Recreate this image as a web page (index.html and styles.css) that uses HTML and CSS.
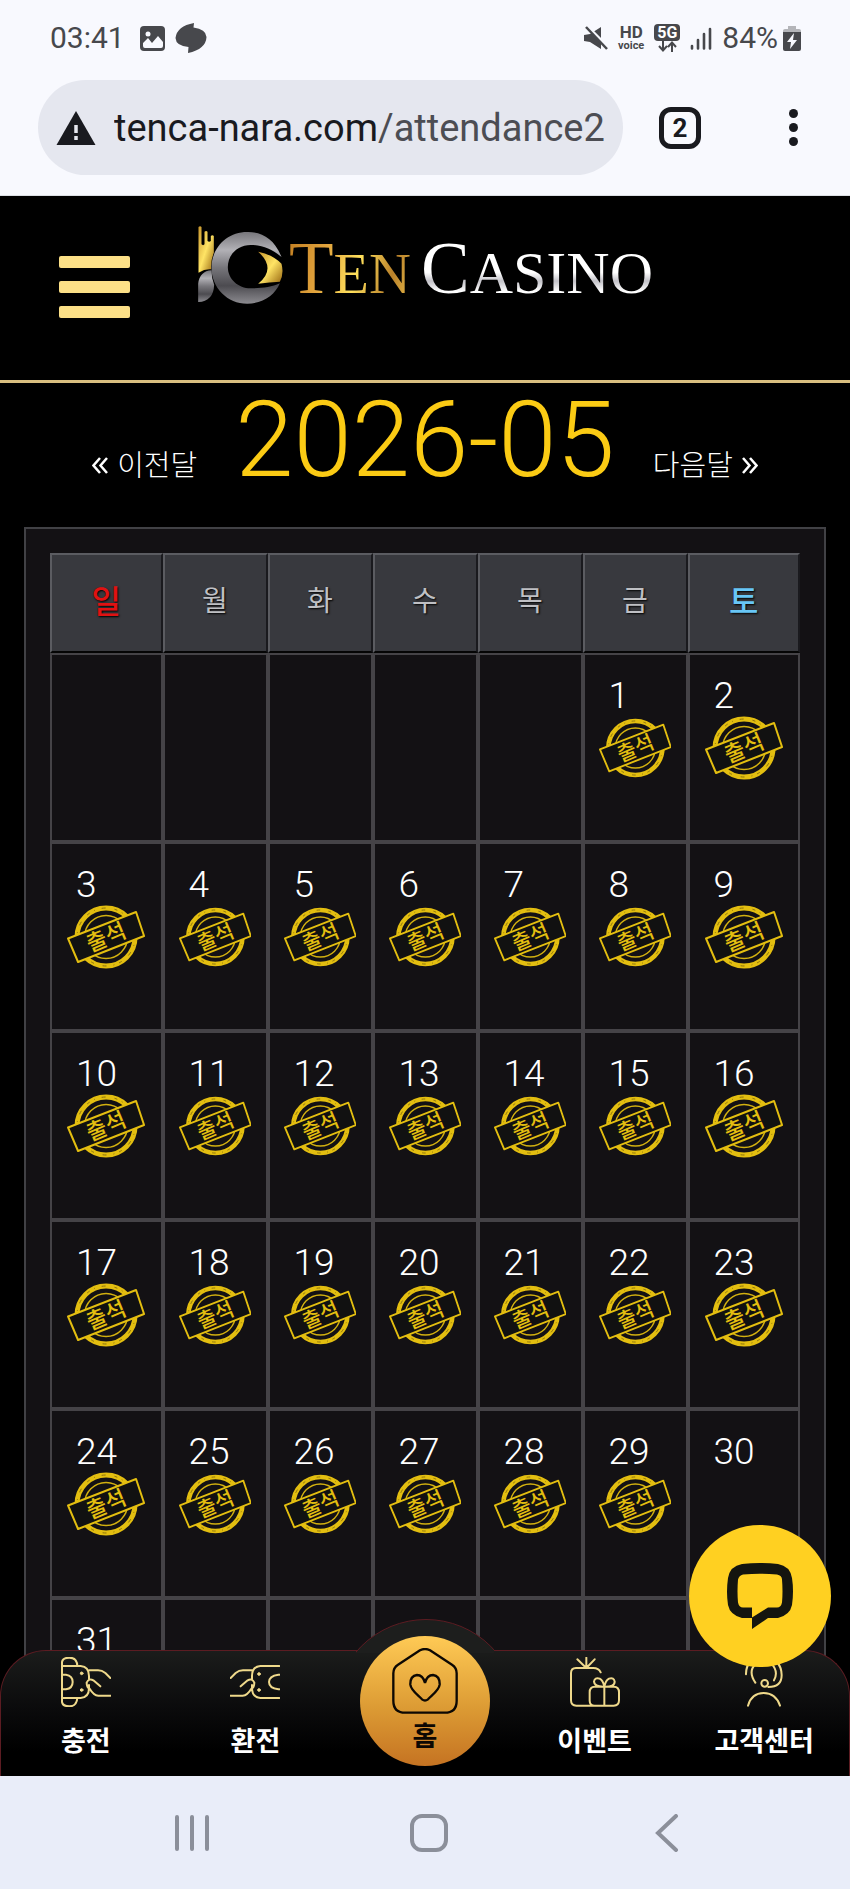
FILE: index.html
```html
<!DOCTYPE html>
<html lang="ko">
<head>
<meta charset="utf-8">
<meta name="viewport" content="width=device-width, initial-scale=1">
<title>TEN CASINO</title>
<link rel="stylesheet" href="styles.css">
</head>
<body>
<svg class="defs" aria-hidden="true">
  <defs>
    <symbol id="stamp" viewBox="0 0 78 64">
      <circle cx="39" cy="32" r="29" fill="none" stroke="#e3be10" stroke-width="5"/>
      <circle cx="39" cy="32" r="29" fill="none" stroke="#8a720c" stroke-width="1" stroke-dasharray="3 5 1 7 4 9"/>
      <circle cx="39" cy="32" r="21.5" fill="none" stroke="#d2b010" stroke-width="1.5"/>
      <path d="M1 33.500 69 7 77 31 11 57Z" fill="#111" stroke="#e3be10" stroke-width="2" stroke-linejoin="round"/>
      <text x="39" y="40" text-anchor="middle" transform="rotate(-23 39 32)" class="stamp-text">출석</text>
    </symbol>
  </defs>
</svg>

<div class="phone">
  <div class="status">
    <div class="status-side">
      <span class="status-text">03:41</span>
      <svg class="status-first" width="25" height="25" viewBox="0 0 25 25"><rect width="25" height="25" rx="4" fill="#47484c"/><circle cx="8" cy="8" r="2.500" fill="#f8f9fe"/><path d="M3 20v-3l5-5 4 5 6-7 5 6v4q0 2-2 2H5q-2 0-2-2Z" fill="#f8f9fe"/></svg>
      <svg width="32" height="30" viewBox="0 0 32 30"><path d="M19 0 18.500 4.500Q31 6 31.500 14 31 26 13 30L13.500 24Q1 23 0.500 15 2 3 19 0Z" fill="#47484c"/></svg>
    </div>
    <div class="status-side">
      <svg width="24" height="24" viewBox="0 0 24 24"><path d="M0 9 6 8 17 1V23L6 16 0 15Z" fill="#47484c"/><path d="M4 1 24 21" stroke="#f8f9fe" stroke-width="3"/><path d="M2 1 23 23" stroke="#47484c" stroke-width="2.500"/></svg>
      <span class="hd"><b>HD</b><small>voice</small></span>
      <span class="net"><b>5G</b><svg width="20" height="11" viewBox="0 0 20 11" fill="none" stroke="#47484c" stroke-width="2"><path d="M6 0V9M2 5 6 9.500 10 5M15 11V2M11 6 15 1.500 19 6"/></svg></span>
      <svg width="22" height="23" viewBox="0 0 22 23" stroke="#47484c" stroke-width="2.600" stroke-linecap="round"><path d="M2 19v2.500M8 13v8.500M14 7v14.500M20 2v19.500"/></svg>
      <span class="battery"><span class="status-text">84%</span><svg width="18" height="26" viewBox="0 0 18 26"><path d="M5 1h8v3h3q2 0 2 2v4H0V6q0-2 2-2h3Z" fill="#b4b5b9"/><path d="M0 7h18v17q0 2-2 2H2q-2 0-2-2Z" fill="#47484c"/><path d="M11 8 4 17h4l-1 7 7-9h-4Z" fill="#f8f9fe"/></svg></span>
    </div>
  </div>

  <div class="browser">
    <button class="address" type="button" aria-label="주소창">
      <svg width="40" height="34" viewBox="0 0 40 34"><path d="M20 0 39.500 34H.5Z" fill="#191a1f"/><path d="M20 14v8M20 25v4" stroke="#e6e8ef" stroke-width="3.500"/></svg>
      <span class="url">tenca-nara.com<span class="url-path">/attendance2</span></span>
    </button>
    <button class="tabs" type="button" aria-label="탭">2</button>
    <button class="more" type="button" aria-label="더보기"><i></i><i></i><i></i></button>
  </div>

  <div class="site">
    <header class="header">
      <button class="burger" type="button" aria-label="메뉴"><i></i><i></i><i></i></button>
      <a class="logo" href="#" aria-label="TEN CASINO">
        <svg width="85" height="78" viewBox="0 0 254 234">
          <defs>
            <linearGradient id="silver" x1="0" y1="0" x2="0" y2="1"><stop offset="0" stop-color="#77767b"/><stop offset=".25" stop-color="#b2b1b6"/><stop offset=".5" stop-color="#77767b"/><stop offset=".75" stop-color="#4c4b50"/><stop offset="1" stop-color="#8c8b90"/></linearGradient>
            <linearGradient id="gold" x1="0" y1="0" x2="1" y2="1"><stop offset="0" stop-color="#c8962c"/><stop offset=".5" stop-color="#ffe465"/><stop offset="1" stop-color="#96650f"/></linearGradient>
          </defs>
          <path d="M250 93C228 35 188 17 147 18 85 18 40 67 40 125c0 60 48 108 107 108 47 0 83-25 98-61-25 12-55 15-88 15-36 0-68-27-68-64 0-38 31-66 68-66 38 0 66 14 93 36Z" fill="url(#silver)"/>
          <path d="M0 228v-55q5-38 40-40 0 24 8 43-2 50-48 52Z" fill="url(#silver)"/>
          <path d="M1 3q5-4 9 0v52q5 5 9 0V17q5-4 9 0v28q5 4 10 0V30q5-4 9 0v50q-10 24-8 50-18-2-38 10Z" fill="url(#gold)"/>
          <path d="M180 77q43 9 70 36 8 30-5 54-30 1-65 6 56-45 0-96Z" fill="url(#gold)"/>
        </svg>
        <span class="word ten">T<small>EN</small></span>
        <span class="word casino">C<small>ASINO</small></span>
      </a>
    </header>

    <main class="main">
      <div class="month">
        <a class="month-link" href="#"><svg width="16" height="17" viewBox="0 0 16 17" fill="none" stroke="#fff" stroke-width="2.500"><path d="M8 1 1.500 8.500 8 16M15 1 8.500 8.500 15 16"/></svg><span>이전달</span></a>
        <h1>2026-05</h1>
        <a class="month-link" href="#"><span>다음달</span><svg width="16" height="17" viewBox="0 0 16 17" fill="none" stroke="#fff" stroke-width="2.500"><path d="M1 1 7.500 8.500 1 16M8 1 14.500 8.500 8 16"/></svg></a>
      </div>

      <div class="frame">
        <table class="calendar">
          <thead>
            <tr><th class="sun" scope="col">일</th><th scope="col">월</th><th scope="col">화</th><th scope="col">수</th><th scope="col">목</th><th scope="col">금</th><th class="sat" scope="col">토</th></tr>
          </thead>
          <tbody>
            <tr>
              <td></td><td></td><td></td><td></td><td></td>
              <td>1<svg class="stamp"><use href="#stamp"/></svg></td>
              <td>2<svg class="stamp"><use href="#stamp"/></svg></td>
            </tr>
            <tr>
              <td>3<svg class="stamp"><use href="#stamp"/></svg></td>
              <td>4<svg class="stamp"><use href="#stamp"/></svg></td>
              <td>5<svg class="stamp"><use href="#stamp"/></svg></td>
              <td>6<svg class="stamp"><use href="#stamp"/></svg></td>
              <td>7<svg class="stamp"><use href="#stamp"/></svg></td>
              <td>8<svg class="stamp"><use href="#stamp"/></svg></td>
              <td>9<svg class="stamp"><use href="#stamp"/></svg></td>
            </tr>
            <tr>
              <td>10<svg class="stamp"><use href="#stamp"/></svg></td>
              <td>11<svg class="stamp"><use href="#stamp"/></svg></td>
              <td>12<svg class="stamp"><use href="#stamp"/></svg></td>
              <td>13<svg class="stamp"><use href="#stamp"/></svg></td>
              <td>14<svg class="stamp"><use href="#stamp"/></svg></td>
              <td>15<svg class="stamp"><use href="#stamp"/></svg></td>
              <td>16<svg class="stamp"><use href="#stamp"/></svg></td>
            </tr>
            <tr>
              <td>17<svg class="stamp"><use href="#stamp"/></svg></td>
              <td>18<svg class="stamp"><use href="#stamp"/></svg></td>
              <td>19<svg class="stamp"><use href="#stamp"/></svg></td>
              <td>20<svg class="stamp"><use href="#stamp"/></svg></td>
              <td>21<svg class="stamp"><use href="#stamp"/></svg></td>
              <td>22<svg class="stamp"><use href="#stamp"/></svg></td>
              <td>23<svg class="stamp"><use href="#stamp"/></svg></td>
            </tr>
            <tr>
              <td>24<svg class="stamp"><use href="#stamp"/></svg></td>
              <td>25<svg class="stamp"><use href="#stamp"/></svg></td>
              <td>26<svg class="stamp"><use href="#stamp"/></svg></td>
              <td>27<svg class="stamp"><use href="#stamp"/></svg></td>
              <td>28<svg class="stamp"><use href="#stamp"/></svg></td>
              <td>29<svg class="stamp"><use href="#stamp"/></svg></td>
              <td>30</td>
            </tr>
            <tr><td>31</td><td></td><td></td><td></td><td></td><td></td><td></td></tr>
          </tbody>
        </table>
      </div>
    </main>

    <nav class="dock">
      <div class="bump"></div>
      <a class="dock-item" href="#">
        <svg class="dock-icon" viewBox="0 0 150 150"><path d="M3 27V15Q5 2 25 2 48 2 49 27M3 123v12q2 13 22 13 22 0 24-25M3 27v96M3 27h56q25 2 25 30v9M3 123h56q25-2 25-30v-9M3 53h12q20 3 20 22T15 97H3M84 40h27q12 0 22 8l15 15M118 88 97 70Q84 62 77 77q0 14 9 18 12 20 26 21h36"/><circle cx="62" cy="49" r="4" class="dot"/><circle cx="62" cy="99" r="4" class="dot"/></svg>
        충전</a>
      <a class="dock-item" href="#">
        <svg class="dock-icon" viewBox="0 0 150 150"><path d="M148 27H91Q66 29 66 57v9M148 123H91Q66 121 66 93v-9M148 53h-3q-28 4-28 22t28 22h3M66 40H39q-12 0-22 8L2 63M32 88 53 70Q66 62 73 77q0 14-9 18-12 20-26 21H2"/><circle cx="87" cy="51" r="4" class="dot"/><circle cx="87" cy="99" r="4" class="dot"/></svg>
        환전</a>
      <a class="dock-item home" href="#">
        <svg width="66" height="66" viewBox="0 0 198 198" fill="none" stroke="#0d0803" stroke-width="7" stroke-linejoin="round"><path d="M84 7q15-8 30 0l66 43q14 9 14 26v82q0 36-36 36H40Q4 194 4 158V76q0-17 14-26ZM99 105Q93 81 75 81 54 84 55 110c2 18 25 33 35 44q9 7 18 0c10-11 33-26 35-44q1-26-20-29-18 0-24 24"/></svg>
        홈</a>
      <a class="dock-item" href="#">
        <svg class="dock-icon" viewBox="0 0 150 150"><path d="M92 46Q86 33 70 33H18Q3 33 3 48v82q0 16 16 16h112q16 0 16-16v-24q0-17-15-17H74q-15 0-15 17v25q0 15 15 15M49 2v31M22 7l27 26L74 7M103 89v57M103 89Q73 90 72 74 74 60 89 65q10 5 14 24 4-19 14-24 15-5 17 9 0 16-31 15"/></svg>
        이벤트</a>
      <a class="dock-item" href="#">
        <svg class="dock-icon" viewBox="0 0 150 150"><path d="M21 52Q20 4 74 2q53 2 54 52 0 36-40 36M49 77Q26 42 50 22q25-20 49 0 20 22 6 48M27 146q10-37 47-38 37 1 49 38"/><circle cx="77" cy="79" r="10"/></svg>
        고객센터</a>
    </nav>
    <button class="chat" type="button" aria-label="채팅 상담">
      <svg width="66" height="66" viewBox="0 0 66 66" fill="#14150f" fill-rule="evenodd"><path d="M15 1Q33-1 51 1 63 3 65 15q2 13 0 27-2 10-14 13H41L25 66V55H15Q3 52 1 42-1 29 1 15 3 3 15 1ZM16 11.500Q33 10 50 11.500q5 1 5 5 1 12 0 23-1 5-5 5H41L25 54.500v-10h-9q-4 0-5-5-1-11 0-23 1-4 5-5Z"/></svg>
    </button>
  </div>

  <div class="system">
    <button type="button" aria-label="최근 앱"><svg width="36" height="38" viewBox="0 0 36 38"><path d="M3 3v32M18 3v32M33 3v32"/></svg></button>
    <button type="button" aria-label="홈"><svg width="38" height="38" viewBox="0 0 38 38"><rect x="2" y="2" width="34" height="34" rx="10"/></svg></button>
    <button type="button" aria-label="뒤로"><svg width="38" height="38" viewBox="0 0 38 38"><path d="M28 2 10 19 28 36"/></svg></button>
  </div>
</div>
</body>
</html>
```

FILE: styles.css
```css
* { box-sizing: border-box; }
body {
  margin: 0;
  background: #000;
  color: #fff;
  font-family: Roboto, "Noto Sans CJK KR", sans-serif;
}
button { margin: 0; padding: 0; border: 0; background: none; font: inherit; color: inherit; cursor: pointer; }
a { color: inherit; text-decoration: none; }
svg { flex: none; }
.defs { display: block; width: 0; height: 0; }
.stamp-text { font: 500 22px "Noto Sans CJK KR", sans-serif; fill: #e3be10; }

.phone { display: flex; flex-direction: column; height: 100vh; }

/* Device status bar */
.status {
  display: flex;
  justify-content: space-between;
  align-items: center;
  padding: 20px 49px 0 50px;
  height: 56px;
  background: #f8f9fe;
  color: #47484c;
}
.status-side { display: flex; align-items: center; gap: 10px; }
.status-text { font-size: 30px; line-height: 36px; }
.status-first { margin-left: 5px; }
.battery { display: flex; align-items: center; gap: 5px; }
.hd { display: flex; flex-direction: column; align-items: center; font-size: 17px; line-height: 16px; }
.hd small { font-size: 11px; font-weight: 700; line-height: 12px; }
.net { display: flex; flex-direction: column; align-items: center; }
.net b { width: 26px; border-radius: 4px; background: #47484c; color: #fff; font-size: 16px; line-height: 17px; text-align: center; }

/* Browser toolbar */
.browser {
  display: flex;
  align-items: center;
  padding: 24px 52px 20px 38px;
  background: #f8f9fe;
  border-bottom: 1px solid #dcdfe4;
  color: #191a1f;
}
.address {
  display: flex;
  align-items: center;
  gap: 18px;
  flex: 1;
  min-width: 0;
  height: 95px;
  padding: 0 19px 0 18px;
  border-radius: 48px;
  background: #e5e7ef;
}
.url { flex: 1; overflow: hidden; white-space: nowrap; text-align: left; font-size: 38px; line-height: 48px; }
.url-path { color: #4c4d53; }
.tabs {
  width: 42px;
  height: 42px;
  margin: 0 88px 0 36px;
  border: 5px solid #191a1f;
  border-radius: 12px;
  font-size: 26px;
  font-weight: 700;
  line-height: 32px;
}
.more { display: flex; flex-direction: column; gap: 5px; }
.more i { width: 9px; height: 9px; border-radius: 50%; background: #191a1f; }

/* Site */
.site { position: relative; flex: 1; min-height: 0; overflow: hidden; background: #000; }
.header {
  display: flex;
  align-items: flex-start;
  gap: 68px;
  height: 187px;
  padding: 30px 59px 0;
  border-bottom: 3px solid #d9bf80;
}
.burger { display: flex; flex-direction: column; gap: 13px; width: 71px; padding-top: 30px; }
.burger i { height: 12px; border-radius: 2px; background: #fce087; }
.logo { display: flex; align-items: flex-start; }
.word {
  padding-top: 4px;
  font-family: "Liberation Serif", serif;
  font-size: 73px;
  line-height: 78px;
  color: transparent;
  background-clip: text;
  -webkit-background-clip: text;
}
.word small { font-size: 60px; }
.ten { margin-left: 6px; background-image: linear-gradient(105deg, #c07c20, #e2a43d 30%, #ffe05c 55%, #b9812a 80%, #ecc04c); }
.ten small { font-size: 58px; }
.casino { margin-left: 10px; background-image: linear-gradient(#fff 40%, #fff 54%, #c3c2c8 64%, #fff 76%); }

.month { display: flex; justify-content: center; align-items: baseline; gap: 38px; height: 144px; }
.month h1 { margin: 0; color: #fbcb14; font-size: 105px; font-weight: 300; line-height: 116px; }
.month-link { font-family: "Noto Sans CJK KR", sans-serif; font-size: 29px; font-weight: 300; line-height: 40px; }
.month-link svg { margin: 0 9px 2px 0; }
.month-link span + svg { margin: 0 0 2px 9px; }

.frame { margin: 0 24px; padding: 24px; border: 2px solid #414145; background: #131114; }
.calendar { width: 100%; table-layout: fixed; border-collapse: separate; border-spacing: 0; }
.calendar th {
  width: 14%;
  height: 100px;
  padding: 0 0 8px;
  border: 2px solid;
  border-color: #5b5c61 #1a1a1e #050505 #5b5c61;
  background: #38393e;
  color: #bfc0c4;
  font-family: "Noto Sans CJK KR", sans-serif;
  font-size: 28px;
  font-weight: 400;
  line-height: 36px;
  text-shadow: 1px 1px 2px #000;
}
.calendar .sun, .calendar .sat { width: 15%; font-size: 32px; font-weight: 500; }
.calendar .sun { color: #e01212; }
.calendar .sat { color: #68c6f6; }
.calendar td {
  height: 189px;
  padding: 21px 0 0 24px;
  border: 2px solid #454347;
  vertical-align: top;
  font-size: 37px;
  font-weight: 300;
  line-height: 40px;
}
/* Centred in the whole cell, past the left padding of the date */
.stamp { display: block; width: calc((100% + 24px) * .72); height: 64px; margin-left: calc((100% + 24px) * .14 - 24px); }

/* Bottom navigation */
.dock {
  position: absolute;
  left: 0;
  right: 0;
  bottom: 0;
  display: grid;
  grid-template-columns: repeat(5, 1fr);
  height: 126px;
  border: 1px solid #5c1c22;
  border-bottom: 0;
  border-radius: 46px 46px 0 0;
  background: linear-gradient(#1b1c1b, #0b0b0c 45%, #000 80%);
}
.bump { position: absolute; left: 50%; top: -32px; width: 138px; height: 34px; margin-left: -69px; overflow: hidden; }
.bump::before {
  content: "";
  position: absolute;
  left: -22px;
  top: 0;
  width: 182px;
  height: 182px;
  border: 1px solid #5c1c22;
  border-radius: 50%;
  background: #1d1e1d;
}
.dock-item {
  position: relative;
  display: flex;
  flex-direction: column;
  align-items: center;
  gap: 15px;
  padding-top: 6px;
  font-family: "Noto Sans CJK KR", sans-serif;
  font-size: 27px;
  font-weight: 700;
  line-height: 36px;
  white-space: nowrap;
}
.dock-icon { width: 50px; height: 50px; fill: none; stroke: #efd98b; stroke-width: 6; stroke-linecap: round; stroke-linejoin: round; }
.dot { fill: #efd98b; stroke-width: 3; }
.home {
  justify-self: center;
  gap: 3px;
  width: 130px;
  height: 130px;
  margin-top: -15px;
  padding-top: 12px;
  border-radius: 50%;
  background: linear-gradient(#ffca55, #dc9b34 55%, #c57322);
  color: #0d0803;
}
.chat {
  position: absolute;
  right: 19px;
  bottom: 109px;
  display: flex;
  align-items: center;
  justify-content: center;
  width: 142px;
  height: 142px;
  border-radius: 50%;
  background: #ffd021;
}

/* System navigation */
.system { display: flex; justify-content: center; gap: 200px; height: 113px; padding-left: 10px; background: #e9edf9; }
.system svg { display: block; fill: none; stroke: #8b8f9a; stroke-width: 4; stroke-linecap: round; }
```
